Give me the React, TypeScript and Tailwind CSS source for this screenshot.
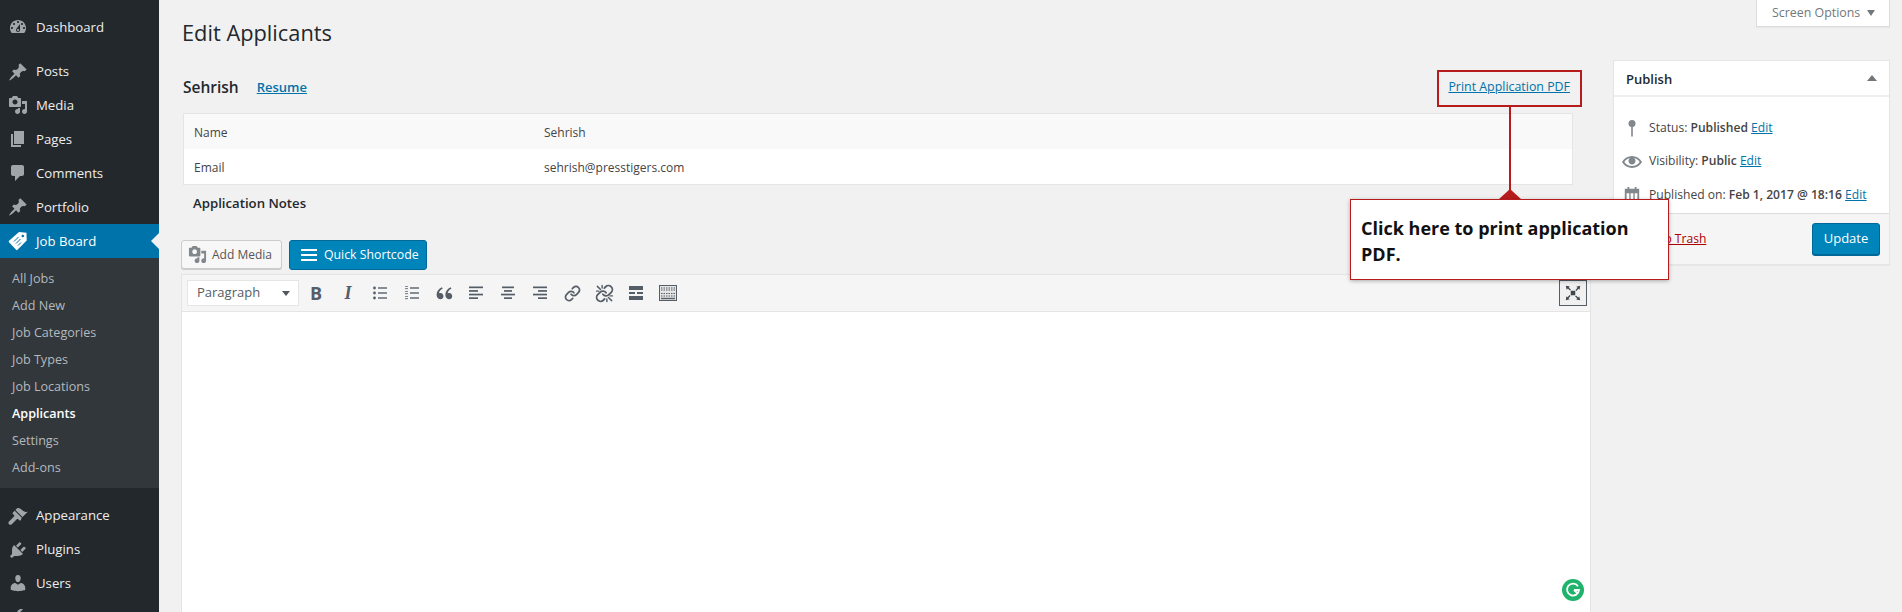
import React from "react";
import { Link } from "lucide-react";
import { RiDoubleQuotesL } from "react-icons/ri";

const P: Record<string, string> = {
  dashboard:
    "M3.76 16h12.48c1.1-1.37 1.76-3.11 1.76-5 0-4.42-3.58-8-8-8s-8 3.58-8 8c0 1.89.66 3.63 1.76 5zM10 4c.55 0 1 .45 1 1s-.45 1-1 1-1-.45-1-1 .45-1 1-1zM6 6c.55 0 1 .45 1 1s-.45 1-1 1-1-.45-1-1 .45-1 1-1zm8 0c.55 0 1 .45 1 1s-.45 1-1 1-1-.45-1-1 .45-1 1-1zm-5.37 5.55L12 7v6c0 1.1-.9 2-2 2s-2-.9-2-2c0-.57.24-1.08.63-1.45zM4 10c.55 0 1 .45 1 1s-.45 1-1 1-1-.45-1-1 .45-1 1-1zm12 0c.55 0 1 .45 1 1s-.45 1-1 1-1-.45-1-1 .45-1 1-1zm-5 3c0-.55-.45-1-1-1s-1 .45-1 1 .45 1 1 1 1-.45 1-1z",
  pin: "M10.44 3.02l1.82-1.82 6.36 6.35-1.83 1.82c-1.05-.68-2.48-.57-3.41.36l-.75.75c-.92.93-1.04 2.35-.35 3.41l-1.83 1.82-2.41-2.41-2.8 2.79c-.42.42-3.38 2.71-3.8 2.29s1.86-3.39 2.28-3.81l2.79-2.79L4.1 9.36l1.83-1.82c1.05.69 2.48.57 3.4-.36l.75-.75c.93-.92 1.05-2.35.36-3.41z",
  media:
    "M13 11V4c0-.55-.45-1-1-1h-1.67L9 1H5L3.67 3H2c-.55 0-1 .45-1 1v7c0 .55.45 1 1 1h10c.55 0 1-.45 1-1zM7 4.5c1.38 0 2.5 1.12 2.5 2.5S8.38 9.5 7 9.5 4.5 8.38 4.5 7 5.62 4.5 7 4.5zM14 6h5v10.5c0 1.38-1.12 2.5-2.5 2.5S14 17.88 14 16.5s1.12-2.5 2.5-2.5c.17 0 .34.02.5.05V9h-3V6zm-4 8.05V13h2v3.5c0 1.38-1.12 2.5-2.5 2.5S7 17.88 7 16.5 8.12 14 9.5 14c.17 0 .34.02.5.05z",
  pages: "M6 15V2h10v13H6zm-1 1h8v2H3V5h2v11z",
  comments: "M5 2h9c1.1 0 2 .9 2 2v7c0 1.1-.9 2-2 2h-2l-5 5v-5H5c-1.1 0-2-.9-2-2V4c0-1.1.9-2 2-2z",
  appearance:
    "M14.5 11L7.4 4l1.5-1.5c.5-.6 2.3-.5 3.5.3 1.2.8 1.4 1.3 2.9 2.1 1.2.6 2.5 1.3 4.5.9zm-.7.8L6.7 4.7 4.9 6.5c-.4.4-.4 1 0 1.4L6 9c.4.4.4 1 0 1.4l-5 5c-.8.8-.8 2 0 2.8s2 .8 2.8 0l5-5c.4-.4 1-.4 1.4 0l1.1 1c.4.4 1 .4 1.4 0z",
  plugins:
    "M13.11 4.36L9.87 7.6 8 5.73l3.24-3.24c.35-.34 1.05-.2 1.56.32.52.51.66 1.21.31 1.55zm-8 1.77l.91-1.12 9.01 9.01-1.19.84c-.71.71-2.63 1.16-3.82 1.16H6.14L4.9 17.26c-.59.59-1.54.59-2.12 0-.59-.58-.59-1.53 0-2.12l1.24-1.24v-3.88c0-1.13.4-3.19 1.09-3.89zm7.26 3.97l3.24-3.24c.34-.35 1.04-.21 1.55.31.52.51.66 1.21.31 1.55l-3.24 3.25z",
  users:
    "M10 9.25c-2.27 0-2.73-3.44-2.73-3.44C7 4.02 7.82 2 9.97 2c2.16 0 2.98 2.02 2.71 3.81 0 0-.41 3.44-2.68 3.44zm0 2.57L12.72 10c2.39 0 4.52 2.33 4.52 4.53v2.49s-3.65 1.13-7.24 1.13c-3.65 0-7.24-1.13-7.24-1.13v-2.49c0-2.25 1.94-4.48 4.47-4.48z",
  tools:
    "M16.68 9.77c-1.34 1.34-3.3 1.67-4.95.99l-5.41 6.52c-.99.99-2.59.99-3.58 0s-.99-2.59 0-3.57l6.52-5.42c-.68-1.65-.35-3.61.99-4.95 1.28-1.28 3.12-1.62 4.72-1.06l-2.89 2.89 2.82 2.82 2.86-2.87c.53 1.58.18 3.39-1.08 4.65z",
  eye: "M19.7 9.4C17.7 6 14 3.9 10 3.9S2.3 6 .3 9.4L0 10l.3.6c2 3.4 5.7 5.5 9.7 5.5s7.7-2.1 9.7-5.5l.3-.6-.3-.6zM10 14.1c-3.1 0-6-1.6-7.7-4.1C3.6 8 5.7 6.6 8 6.1c-.9.6-1.5 1.7-1.5 2.9 0 1.9 1.6 3.5 3.5 3.5s3.5-1.6 3.5-3.5c0-1.2-.6-2.3-1.5-2.9 2.3.5 4.4 1.9 5.7 3.9-1.7 2.5-4.6 4.1-7.7 4.1z",
};

function Dash({ name, className }: { name: string; className: string }) {
  return (
    <svg viewBox="0 0 20 20" className={className} fill="currentColor">
      <path d={P[name]} />
    </svg>
  );
}

function TagIcon() {
  return (
    <svg viewBox="0 0 20 20" className="w-[20px] h-[20px] text-white" fill="currentColor">
      <path d="M11 1l7.5.8.2 7.7-9.2 9.3a1 1 0 0 1-1.4 0L1 11.2a1 1 0 0 1 0-1.4z" />
      <circle cx="14.8" cy="5" r="1.3" fill="#0073aa" />
      <path d="M6 10.5l4.5-4.5M8 12.5L12.5 8M10 14.5l3-3" stroke="#0073aa" strokeWidth="1" />
    </svg>
  );
}

function MenuItem({ icon, label, low }: { icon: string; label?: string; low?: boolean }) {
  return (
    <div className="h-[33.8px] flex items-center pl-[8px] text-[#eeeeee]">
      <Dash name={icon} className="w-[20px] h-[20px] text-[#a0a5aa] shrink-0" />
      {label && <span className={low ? "ml-[8px] pt-[2px]" : "ml-[8px]"}>{label}</span>}
    </div>
  );
}

function Sidebar() {
  const subs = ["All Jobs", "Add New", "Job Categories", "Job Types", "Job Locations", "Applicants", "Settings", "Add-ons"];
  return (
    <aside className="w-[159px] shrink-0 bg-[#23282d] text-[13.2px] h-[612px] overflow-hidden pt-[10px]">
      <MenuItem icon="dashboard" label="Dashboard" low />
      <div className="h-[11px]" />
      <MenuItem icon="pin" label="Posts" />
      <MenuItem icon="media" label="Media" />
      <MenuItem icon="pages" label="Pages" low />
      <MenuItem icon="comments" label="Comments" low />
      <MenuItem icon="pin" label="Portfolio" low />
      <div className="relative h-[34px] flex items-center pl-[8px] bg-[#0073aa] text-white">
        <TagIcon />
        <span className="ml-[8px] pt-[2px]">Job Board</span>
        <div className="absolute right-0 top-[9px] border-y-[8px] border-r-[8px] border-y-transparent border-r-[#f1f1f1]" />
      </div>
      <div className="bg-[#32373c] py-[7.5px] text-[12.6px]">
        {subs.map((s) => (
          <div
            key={s}
            className={
              "h-[26.9px] flex items-center pl-[12px] pt-[2px] " +
              (s === "Applicants" ? "text-white font-semibold" : "text-[#b4b9be]")
            }
          >
            {s}
          </div>
        ))}
      </div>
      <div className="h-[11px]" />
      <MenuItem icon="appearance" label="Appearance" />
      <MenuItem icon="plugins" label="Plugins" />
      <MenuItem icon="users" label="Users" />
      <MenuItem icon="tools" />
    </aside>
  );
}

function Lines({ kind }: { kind: "left" | "center" | "right" }) {
  const rows =
    kind === "left"
      ? [[2, 14], [2, 9], [2, 14], [2, 9]]
      : kind === "center"
      ? [[3, 12], [5, 8], [2, 14], [5, 8]]
      : [[2, 14], [7, 9], [2, 14], [7, 9]];
  return (
    <svg viewBox="0 0 18 18" className="w-[18px] h-[18px] text-[#555d66]" fill="currentColor">
      {rows.map(([x, w], i) => (
        <rect key={i} x={x} y={2.5 + i * 3.6} width={w} height="1.7" />
      ))}
    </svg>
  );
}

function Tool({ children }: { children: React.ReactNode }) {
  return <div className="w-[32px] h-[24px] flex items-center justify-center text-[#555d66]">{children}</div>;
}

function Toolbar() {
  return (
    <div className="h-[38px] bg-[#f5f5f5] border-y border-[#e5e5e5] border-x flex items-center pl-[5px] relative">
      <div className="w-[112px] h-[26px] bg-white border border-[#e5e5e5] flex items-center justify-between pl-[9px] pr-[8px] text-[13px] text-[#555d66]">
        <span>Paragraph</span>
        <span className="border-x-[4px] border-t-[5px] border-x-transparent border-t-[#50575e]" />
      </div>
      <div className="flex items-center ml-[1px]">
        <Tool>
          <span className="text-[18px] leading-none font-bold font-['Open_Sans',sans-serif]">B</span>
        </Tool>
        <Tool>
          <span className="text-[18px] leading-none font-bold italic font-['Liberation_Serif',serif]">I</span>
        </Tool>
        <Tool>
          <svg viewBox="0 0 18 18" className="w-[18px] h-[18px]" fill="currentColor">
            {[4, 9, 14].map((y) => (
              <g key={y}>
                <circle cx="3.5" cy={y} r="1.4" />
                <rect x="7" y={y - 0.8} width="9" height="1.6" opacity=".85" />
              </g>
            ))}
          </svg>
        </Tool>
        <Tool>
          <svg viewBox="0 0 18 18" className="w-[18px] h-[18px]" fill="currentColor">
            {[4, 9, 14].map((y) => (
              <g key={y}>
                <rect x="2" y={y - 2} width="3" height="1" opacity=".7" />
                <rect x="2" y={y} width="3" height="1.2" opacity=".7" />
                <rect x="7" y={y - 0.8} width="9" height="1.6" opacity=".85" />
              </g>
            ))}
          </svg>
        </Tool>
        <Tool>
          <RiDoubleQuotesL className="w-[21px] h-[21px]" />
        </Tool>
        <Tool>
          <Lines kind="left" />
        </Tool>
        <Tool>
          <Lines kind="center" />
        </Tool>
        <Tool>
          <Lines kind="right" />
        </Tool>
        <Tool>
          <Link className="w-[17px] h-[17px]" strokeWidth={2.4} />
        </Tool>
        <Tool>
          <svg viewBox="0 0 24 24" className="w-[19px] h-[19px]" fill="none" stroke="currentColor" strokeWidth="2.3" strokeLinecap="round">
            <path d="M10 13a5 5 0 0 0 7.54.54l3-3a5 5 0 0 0-7.07-7.07l-1.72 1.71" />
            <path d="M14 11a5 5 0 0 0-7.54-.54l-3 3a5 5 0 0 0 7.07 7.07l1.71-1.71" />
            <path d="M3 3l4 4M21 21l-4-4M9 2v3M2 9h3M15 22v-3M22 15h-3" strokeWidth="1.8" />
          </svg>
        </Tool>
        <Tool>
          <svg viewBox="0 0 18 18" className="w-[18px] h-[18px]" fill="currentColor">
            <rect x="2" y="2" width="14" height="4" />
            <rect x="2" y="8" width="6" height="2" />
            <rect x="10" y="8" width="6" height="2" />
            <rect x="2" y="12" width="14" height="4" />
          </svg>
        </Tool>
        <Tool>
          <svg viewBox="0 0 20 18" className="w-[20px] h-[18px]" fill="none" stroke="currentColor">
            <rect x="1.5" y="1.5" width="17" height="15" fill="#e5e5e5" strokeWidth="1" />
            <path d="M3 4h14M3 6h14M3 9.5h14M3 12h14" strokeWidth="1.2" strokeDasharray="1.5 1" />
            <path d="M3 14.5h14" strokeWidth="1.4" />
          </svg>
        </Tool>
      </div>
      <div className="absolute left-[1377px] top-[5px] w-[28px] h-[26px] border border-[#555d66] bg-[#f0f0f0] flex items-center justify-center text-[#40464d]">
        <svg viewBox="0 0 20 20" className="w-[18px] h-[18px]" fill="currentColor">
          <path d="M7.5 7.5h5v5h-5z" />
          <path d="M2 2l4.5.7-1.2 1.2 2.4 2.4-1 1-2.4-2.4L3 6.5zM18 2l-.7 4.5-1.2-1.2-2.4 2.4-1-1 2.4-2.4L13.5 3zM2 18l.7-4.5 1.2 1.2 2.4-2.4 1 1-2.4 2.4L6.5 17zM18 18l-4.5-.7 1.2-1.2-2.4-2.4 1-1 2.4 2.4 1.2-1.2z" />
        </svg>
      </div>
    </div>
  );
}

function PublishRow({ icon, children }: { icon: React.ReactNode; children: React.ReactNode }) {
  return (
    <div className="h-[33.7px] flex items-center">
      <div className="w-[20px] flex justify-center shrink-0 text-[#82878c]">{icon}</div>
      <div className="ml-[7px] whitespace-nowrap">{children}</div>
    </div>
  );
}

const Edit = () => <span className="text-[#0073aa] underline">Edit</span>;

function PublishBox() {
  return (
    <div className="w-[277px] h-[205px] bg-white border border-[#e5e5e5] shadow-[0_1px_1px_rgba(0,0,0,0.04)] flex flex-col text-[12.1px] text-[#444]">
      <div className="h-[36px] flex items-center justify-between border-b-2 border-[#eeeeee] pl-[12px] pr-[12px] shrink-0">
        <span className="text-[13px] font-semibold text-[#23282d] pt-[3px]">Publish</span>
        <span className="border-x-[5px] border-b-[6px] border-x-transparent border-b-[#72777c]" />
      </div>
      <div className="flex-1 pl-[8px] pt-[14px]">
        <PublishRow
          icon={
            <svg viewBox="0 0 20 20" className="w-[20px] h-[20px]" fill="currentColor">
              <circle cx="10" cy="5.5" r="3.5" />
              <rect x="9.2" y="8" width="1.6" height="10.5" />
            </svg>
          }
        >
          Status: <b className="font-semibold">Published</b> <Edit />
        </PublishRow>
        <PublishRow icon={<Dash name="eye" className="w-[20px] h-[20px]" />}>
          Visibility: <b className="font-semibold">Public</b> <Edit />
        </PublishRow>
        <PublishRow
          icon={
            <svg viewBox="0 0 20 20" className="w-[18px] h-[18px]" fill="currentColor">
              <path d="M2 3h3V1h2v2h6V1h2v2h3v16H2zm2 5v9h3V8zm4.5 0v9h3V8zM13 8v9h3V8z" fillRule="evenodd" />
            </svg>
          }
        >
          Published on: <b className="font-semibold">Feb 1, 2017 @ 18:16</b> <Edit />
        </PublishRow>
      </div>
      <div className="h-[51px] bg-[#f5f5f5] border-t border-[#dddddd] flex items-center justify-between pl-[12px] pr-[9px] shrink-0">
        <span className="text-[#a00] underline">Move to Trash</span>
        <div className="w-[68px] h-[32px] rounded-[3px] bg-[#0085ba] border border-[#006799] shadow-[0_1px_0_#006799] text-white text-[13px] flex items-center justify-center">
          Update
        </div>
      </div>
    </div>
  );
}

function Callout() {
  return (
    <>
      <div className="absolute left-[1437px] top-[70px] w-[145px] h-[37px] border-2 border-[#b71c1c]" />
      <div className="absolute left-[1509px] top-[107px] w-[2px] h-[85px] bg-[#b71c1c]" />
      <div className="absolute left-[1499px] top-[189px] border-x-[11px] border-b-[10px] border-x-transparent border-b-[#b71c1c]" />
      <div className="absolute left-[1350px] top-[199px] w-[319px] h-[81px] bg-white border border-[#b71c1c] shadow-[0_1px_4px_rgba(0,0,0,0.3)] pl-[10px] pt-[15px] text-[18px] leading-[26px] font-bold text-[#111]">
        Click here to print application
        <br />
        PDF.
      </div>
    </>
  );
}

export default function App() {
  return (
    <div className="relative w-[1902px] h-[612px] overflow-hidden flex bg-[#f1f1f1] font-['Open_Sans',sans-serif] text-[13px] text-[#444]">
      <Sidebar />
      <main className="flex-1 pl-[23px] min-w-0">
        <div className="flex">
          <div className="w-[1410px] shrink-0 -ml-[1px]">
            <h1 className="h-[66px] pt-[17px] pl-[1px] text-[21.8px] leading-[32px] text-[#23282d]">Edit Applicants</h1>
            <div className="ml-[2px] w-[1390px]">
              <div className="h-[47px] flex items-center pb-[4px]">
                <span className="text-[15.5px] font-semibold text-[#23282d]">Sehrish</span>
                <span className="ml-[18px] text-[#0073aa] underline font-semibold">Resume</span>
                <span className="ml-auto mr-[3px] text-[12.4px] text-[#0073aa] underline">Print Application PDF</span>
              </div>
              <div className="border border-[#e5e5e5] bg-white text-[12px]">
                <div className="h-[35px] bg-[#f9f9f9] flex items-center pl-[10px] pt-[2px]">
                  <span className="w-[350px]">Name</span>
                  <span>Sehrish</span>
                </div>
                <div className="h-[35px] flex items-center pl-[10px] pt-[2px]">
                  <span className="w-[350px]">Email</span>
                  <span>sehrish@presstigers.com</span>
                </div>
              </div>
              <div className="h-[36px] pl-[10px] pt-[1px] flex items-center font-semibold text-[13.2px] text-[#23282d]">
                Application Notes
              </div>
            </div>
            <div className="flex gap-[7px] mt-[19px] h-[30px]">
              <div className="w-[101px] h-[29px] rounded-[3px] bg-[#f7f7f7] border border-[#cccccc] shadow-[0_1px_0_#cccccc] flex items-center pl-[6px] text-[12px] text-[#555]">
                <Dash name="media" className="w-[19px] h-[19px] text-[#82878c]" />
                <span className="ml-[5px]">Add Media</span>
              </div>
              <div className="w-[138px] h-[30px] rounded-[3px] bg-[#0085ba] border border-[#006799] flex items-center pl-[11px] text-[12.3px] text-white">
                <svg viewBox="0 0 16 12" className="w-[16px] h-[12px]" fill="currentColor">
                  <rect y="0" width="16" height="2" />
                  <rect y="5" width="16" height="2" />
                  <rect y="10" width="16" height="2" />
                </svg>
                <span className="ml-[7px]">Quick Shortcode</span>
              </div>
            </div>
            <div className="mt-[4px]">
              <Toolbar />
              <div className="relative h-[300px] bg-white border-x border-[#e5e5e5]">
                <svg viewBox="0 0 22 22" className="absolute left-[1380px] top-[267px] w-[22px] h-[22px]">
                  <circle cx="11" cy="11" r="11" fill="#20b36c" />
                  <path d="M16 7.2A6 6 0 1 0 17 11h-5" fill="none" stroke="#fff" strokeWidth="1.8" />
                  <path d="M12 11l4 3.6" stroke="#fff" strokeWidth="1.8" />
                </svg>
              </div>
            </div>
          </div>
          <div className="ml-[22px] pt-[60px]">
            <PublishBox />
          </div>
        </div>
      </main>
      <div className="absolute right-[12px] top-0 w-[134px] h-[27px] bg-white border border-t-0 border-[#dddddd] shadow-[0_1px_1px_rgba(0,0,0,0.04)] flex items-center pl-[15px] text-[12.4px] text-[#72777c]">
        <span>Screen Options</span>
        <span className="ml-[7px] border-x-[4px] border-t-[6px] border-x-transparent border-t-[#72777c]" />
      </div>
      <Callout />
    </div>
  );
}
